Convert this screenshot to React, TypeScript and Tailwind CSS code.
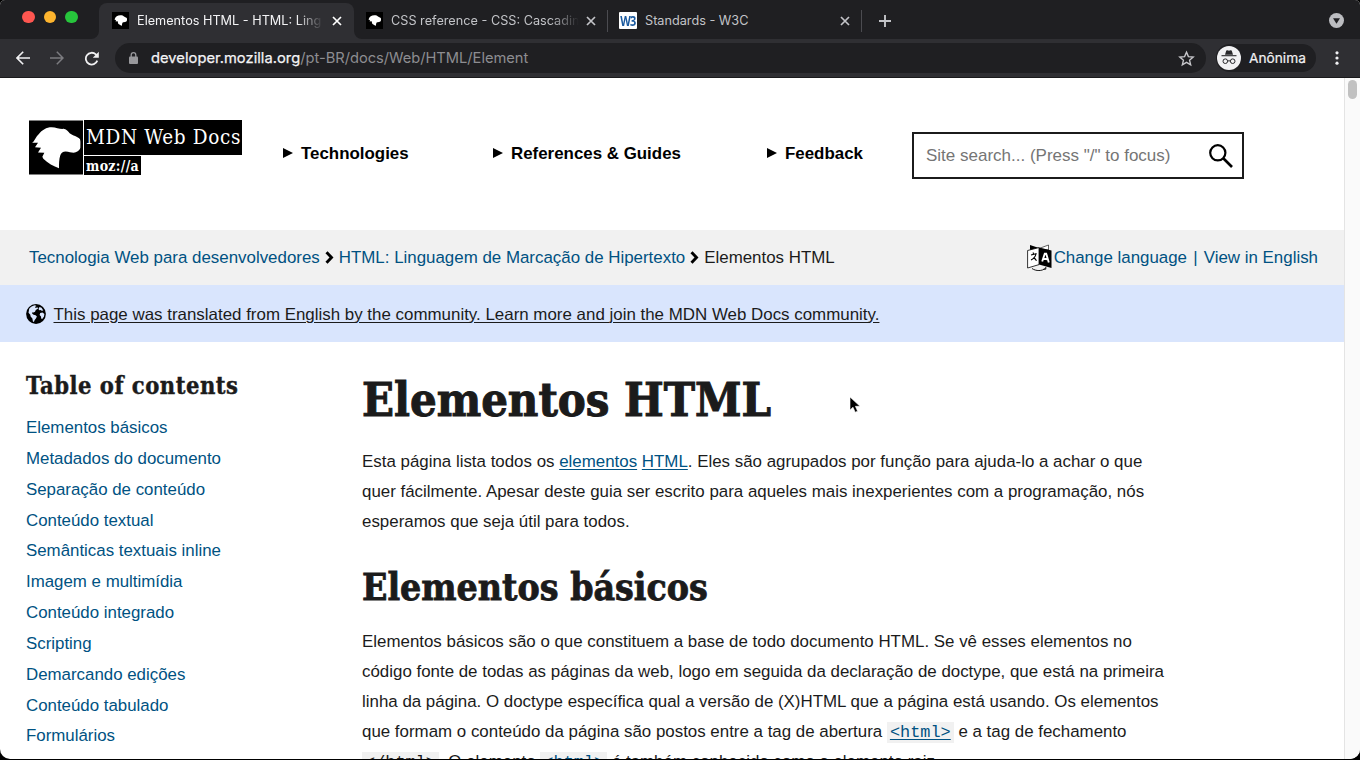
import type { ReactNode } from "react";

const toc = [
  "Elementos básicos",
  "Metadados do documento",
  "Separação de conteúdo",
  "Conteúdo textual",
  "Semânticas textuais inline",
  "Imagem e multimídia",
  "Conteúdo integrado",
  "Scripting",
  "Demarcando edições",
  "Conteúdo tabulado",
  "Formulários",
];

const DINO =
  "M9 67 C17 62 21 48 29 41 C39 28 52 20 68 20 C82 20 94 27 104 25 C114 27 118 34 122 38 C130 45 147 47 153 56 C155 62 154 70 154 82 C152 91 142 96 134 97 C126 97 120 93 110 93 C102 93 96 98 94 104 C90 116 90 130 90 143 C74 138 56 128 43 115 L40 109 L46 97 L27 96 L36 82 L18 80 L27 67 Z";

function DinoMark({ className }: { className: string }) {
  return (
    <svg viewBox="0 0 162 162" className={className}>
      <rect width="162" height="162" fill="#000" />
      <path d={DINO} fill="#fff" />
    </svg>
  );
}

function DinoFavicon() {
  return (
    <svg viewBox="0 0 17 17" className="h-[17px] w-[17px] shrink-0">
      <rect width="17" height="17" fill="#000" />
      <path d="M2.500 7.500C3.600 4.400 5.400 3.200 8.400 3.200c1.800 0 2.900.5 3.600 1.300l2.800 1.500c.5 1.500.3 3.200-.9 3.800-1.400.5-2.800.2-3.400 1-.5.900-.4 1.700-.5 2.900-2.200-.5-3.400-1.300-4.100-2.600l.1-1.700-2.600-.1.800-1z" fill="#fff" />
    </svg>
  );
}

function CloseX({ bright }: { bright?: boolean }) {
  return (
    <svg viewBox="0 0 10 10" className={bright ? "h-[10px] w-[10px] shrink-0 text-white" : "h-[10px] w-[10px] shrink-0 text-[#c3c4c8]"}>
      <path d="M1 1l8 8M9 1l-8 8" stroke="currentColor" strokeWidth="1.7" />
    </svg>
  );
}

function TabStrip() {
  return (
    <div className="flex h-[39px] shrink-0 bg-[#1f1f22] text-[12.700px]">
      <div className="flex w-[99px] gap-[9px] pt-[10.500px] pl-[22px]">
        <span className="h-[12.500px] w-[12.500px] rounded-full bg-[#fe5650]" />
        <span className="h-[12.500px] w-[12.500px] rounded-full bg-[#fdb42e]" />
        <span className="h-[12.500px] w-[12.500px] rounded-full bg-[#27c53c]" />
      </div>
      <div className="relative mt-[3px] flex h-[36px] w-[255px] items-center rounded-t-[8px] bg-[#2f2f33] pb-[1px] pl-[13px] text-[#f3f3f5]">
        <svg viewBox="0 0 8 8" className="absolute bottom-0 -left-[8px] h-[8px] w-[8px]">
          <path d="M8 0v8H0A8 8 0 0 0 8 0z" fill="#2f2f33" />
        </svg>
        <svg viewBox="0 0 8 8" className="absolute -right-[8px] bottom-0 h-[8px] w-[8px]">
          <path d="M0 0v8h8A8 8 0 0 1 0 0z" fill="#2f2f33" />
        </svg>
        <DinoFavicon />
        <span className="ml-[8px] w-[186px] overflow-hidden whitespace-nowrap [mask-image:linear-gradient(to_right,#000_160px,transparent_186px)]">
          Elementos HTML - HTML: Ling
        </span>
        <span className="ml-[9px] flex"><CloseX bright /></span>
      </div>
      <div className="flex h-[41px] w-[253px] items-center pl-[12px] text-[#c3c4c8]">
        <DinoFavicon />
        <span className="ml-[8px] w-[189px] overflow-hidden whitespace-nowrap [mask-image:linear-gradient(to_right,#000_160px,transparent_188px)]">
          CSS reference - CSS: Cascadin
        </span>
        <span className="ml-[6px] flex"><CloseX /></span>
      </div>
      <div className="mt-[10px] h-[22px] w-px bg-[#4b4b50]" />
      <div className="flex h-[41px] w-[253px] items-center pl-[11px] text-[#c3c4c8]">
        <span className="flex h-[17px] w-[18px] items-center justify-center rounded-[1px] bg-white">
          <span className="scale-x-[0.78] text-[14px] leading-[17px] font-bold tracking-[-1px] whitespace-nowrap text-[#1b5a9f] font-['Open_Sans']">W3</span>
        </span>
        <span className="ml-[8px] w-[195px]">Standards - W3C</span>
        <CloseX />
      </div>
      <div className="mt-[10px] h-[22px] w-px bg-[#4b4b50]" />
      <svg viewBox="0 0 12 12" className="mt-[14.500px] ml-[17px] h-[12px] w-[12px] text-[#c3c4c8]">
        <path d="M6 0v12M0 6h12" stroke="currentColor" strokeWidth="1.9" />
      </svg>
      <svg viewBox="0 0 16 16" className="mt-[13px] mr-[16px] ml-auto h-[15px] w-[15px]">
        <circle cx="8" cy="8" r="8" fill="#bcbdc1" />
        <path d="M4.300 5.500h7.400L8 11.500z" fill="#1f1f22" />
      </svg>
    </div>
  );
}

function Toolbar() {
  return (
    <div className="flex h-[39px] shrink-0 items-center border-b border-[#1a1a1c] bg-[#2f2f33]">
      <svg viewBox="0 0 14 14" className="ml-[16px] h-[14px] w-[14px]">
        <path d="M14 7H1.500M7.200 .8L1 7l6.200 6.200" fill="none" stroke="#f1f1f3" strokeWidth="1.600" />
      </svg>
      <svg viewBox="0 0 14 14" className="ml-[20px] h-[14px] w-[14px]">
        <path d="M0 7h12.500M6.800 .8L13 7l-6.200 6.200" fill="none" stroke="#7c7c80" strokeWidth="1.500" />
      </svg>
      <svg viewBox="0 0 16 16" className="ml-[20px] h-[15px] w-[15px]">
        <path d="M14.200 10.300A6.300 6.300 0 1 1 12.600 3.600L14.200 5.100" fill="none" stroke="#f1f1f3" strokeWidth="1.900" />
        <path d="M15.800 .8v6.400H9.300z" fill="#f1f1f3" />
      </svg>
      <div className="ml-[16px] flex h-[30px] w-[1091px] items-center rounded-full bg-[#1f1f22] pl-[14px] text-[14.700px]">
        <svg viewBox="0 0 9 12" className="h-[12px] w-[9px]">
          <rect y="4.500" width="9" height="7.500" rx="1" fill="#98989c" />
          <path d="M2.200 5V3a2.300 2.300 0 0 1 4.600 0v2" fill="none" stroke="#98989c" strokeWidth="1.300" />
        </svg>
        <span className="ml-[13px] tracking-[0.04px] text-[#f3f3f5] [-webkit-text-stroke:0.25px_#f3f3f5]">developer.mozilla.org</span>
        <span className="tracking-[-0.03px] text-[#8d8d91]">/pt-BR/docs/Web/HTML/Element</span>
        <svg viewBox="0 0 24 24" className="mr-[11px] ml-auto h-[17px] w-[17px]">
          <path d="M12 3l2.700 6.300 6.800.6-5.200 4.500 1.600 6.700L12 17.500l-5.900 3.600 1.600-6.700L2.500 9.900l6.800-.6z" fill="none" stroke="#c8c8cc" strokeWidth="1.900" />
        </svg>
      </div>
      <div className="ml-[10px] flex h-[28px] w-[100px] items-center rounded-full bg-[#1f1f22] pl-[1px]">
        <svg viewBox="0 0 24 24" className="h-[24px] w-[24px]">
          <circle cx="12" cy="12" r="12" fill="#f1f1f3" />
          <path d="M8 8.800l1.200-4c.2-.6.700-.7 1.200-.5l1.600.5 1.600-.5c.5-.2 1 0 1.200.5l1.200 4z" fill="#28282b" />
          <path d="M4.500 9.700h15" stroke="#28282b" strokeWidth="1.100" />
          <circle cx="8.300" cy="15.200" r="2.300" fill="none" stroke="#28282b" strokeWidth="1" />
          <circle cx="15.700" cy="15.200" r="2.300" fill="none" stroke="#28282b" strokeWidth="1" />
          <path d="M10.600 15.200q1.400-1 2.800 0" fill="none" stroke="#28282b" strokeWidth="1" />
        </svg>
        <span className="ml-[8px] text-[13.700px] text-[#f1f1f3] [-webkit-text-stroke:0.2px_#f1f1f3]">Anônima</span>
      </div>
      <svg viewBox="0 0 4 14" className="ml-[19px] h-[14px] w-[4px]">
        <circle cx="2" cy="1.800" r="1.600" fill="#f1f1f3" />
        <circle cx="2" cy="7" r="1.600" fill="#f1f1f3" />
        <circle cx="2" cy="12.200" r="1.600" fill="#f1f1f3" />
      </svg>
    </div>
  );
}

function NavItem({ label, className }: { label: string; className: string }) {
  return (
    <div className={`flex items-center text-[16.900px] leading-[20px] font-bold text-black ${className}`}>
      <svg viewBox="0 0 10 10" className="mr-[8px] mb-[2px] h-[10px] w-[10px]">
        <path d="M0 0l10 5-10 5z" fill="#000" />
      </svg>
      {label}
    </div>
  );
}

function SiteHeader() {
  return (
    <header className="flex h-[152px] shrink-0 items-start pl-[29px]">
      <div className="mt-[42px] flex h-[55px] w-[213px] gap-[1px] bg-white">
        <DinoMark className="h-[55px] w-[54px] shrink-0" />
        <div className="flex flex-col items-start gap-[1px] text-white font-['DejaVu_Serif_Condensed','DejaVu_Serif',serif]">
          <div className="h-[35px] w-[158px] bg-black pl-[2px] text-[20.500px] leading-[34px] tracking-[0.650px] whitespace-nowrap">MDN Web Docs</div>
          <div className="h-[19px] w-[57px] bg-black pl-[2px] text-[14px] leading-[20px] font-bold tracking-[0.300px]">moz://a</div>
        </div>
      </div>
      <nav className="mt-[66px] flex w-[670px]">
        <NavItem label="Technologies" className="ml-[41px] w-[210px]" />
        <NavItem label="References & Guides" className="w-[274px]" />
        <NavItem label="Feedback" className="" />
      </nav>
      <div className="mt-[54px] flex h-[47px] w-[332px] items-center border-2 border-[#1b1b1b] pl-[12px]">
        <span className="text-[17px] leading-[20px] text-[#757575]">Site search... (Press "/" to focus)</span>
        <svg viewBox="0 0 24 24" className="mr-[9px] ml-auto h-[24px] w-[24px]">
          <circle cx="8.800" cy="8.800" r="7.600" fill="none" stroke="#000" strokeWidth="2.200" />
          <path d="M14.500 14.500l8.500 8.500" stroke="#000" strokeWidth="2.700" />
        </svg>
      </div>
    </header>
  );
}

function Chevron() {
  return (
    <svg viewBox="0 0 9 13" className="mx-[5px] h-[13px] w-[9px]">
      <path d="M1.500 1.200l5 5.300-5 5.300" fill="none" stroke="#000" strokeWidth="2.900" />
    </svg>
  );
}

function LanguageIcon() {
  return (
    <svg viewBox="0 0 25 27" className="h-[27px] w-[25px]">
      <path d="M3 1l9 3v3L3 6z" fill="#000" />
      <path d="M12 4.500L21.500 1v5L13 4.800z" fill="#fff" stroke="#000" strokeWidth="0.600" />
      <path d="M.6 6.500L12 3.600v17L.6 24z" fill="#fff" stroke="#000" strokeWidth="0.800" />
      <path d="M12 3.600l12.500 2.900V24L12 20.600z" fill="#000" />
      <path d="M4 11l5-1.300c-.5 3-2.500 5-5 6.300M6.500 13.500c1.200.8 2.200 1.800 3 3.300M6 8.500l.6 1.600" fill="none" stroke="#000" strokeWidth="1.100" />
      <path d="M15.200 17.500L17.800 9.600h1.400l2.600 8.800M16.300 14.800l4.400.5" fill="none" stroke="#fff" strokeWidth="1.900" />
      <path d="M5 24.500c4 2.800 10 2.800 13.500-.3M18.800 23v2.200h-2.200" fill="none" stroke="#000" strokeWidth="0.900" />
    </svg>
  );
}

function Breadcrumbs() {
  return (
    <div className="flex h-[55px] shrink-0 items-center bg-[#f1f1f1] pr-[26px] pl-[29px] text-[16.900px] text-[#005282]">
      <span>Tecnologia Web para desenvolvedores</span>
      <Chevron />
      <span>HTML: Linguagem de Marcação de Hipertexto</span>
      <Chevron />
      <span className="text-[#1b1b1b]">Elementos HTML</span>
      <span className="ml-auto flex items-center">
        <LanguageIcon />
        <span className="ml-[2px]">Change language</span>
        <span className="mx-[6.200px]">|</span>
        <span>View in English</span>
      </span>
    </div>
  );
}

function Notice() {
  return (
    <div className="flex h-[57px] shrink-0 items-center bg-[#d9e5fd] pl-[26px]">
      <svg viewBox="0 0 20 20" className="h-[20px] w-[20px]">
        <circle cx="10" cy="10" r="9.900" fill="#000" />
        <path d="M3.200 4.800C4.500 3 6.500 1.600 9 1.300l1.500.8-1.600 1 .9.900 1.600-.8.7 1.400-2.300 1.500-.8 1.600-1.400.8-1.200-.3-.3 1.300 1.500 1.200 2 .6 1.300 1.300-1 2-1.200 1.300-.8 2.200-1-.7-.5-3-1.800-2-.3-1.700L2.500 8.800z" fill="#d9e5fd" />
        <path d="M13.500 3l2 .7 1.800 2.800-1.500.2-1.300-.7-1.200.3-.8-1.300zM14.200 9l2.300-.6 1.900 1.600-.5 2.700-1.700 2.300-1-.4-.2-2.200-1.400-1.400z" fill="#d9e5fd" />
      </svg>
      <span className="ml-[7.500px] pt-[2px] text-[16.910px] leading-[20px] text-[#1b1b1b] underline decoration-1 underline-offset-[2px]">
        This page was translated from English by the community. Learn more and join the MDN Web Docs community.
      </span>
    </div>
  );
}

function Code({ children, link }: { children: ReactNode; link?: boolean }) {
  return (
    <code className="bg-[#f1f1f1] px-[3px] py-[1px] text-[16.900px] leading-[10px] font-['Liberation_Mono',monospace]">
      <span className={link ? "text-[#005282] underline decoration-1 underline-offset-[2px]" : ""}>{children}</span>
    </code>
  );
}

function Sidebar() {
  return (
    <aside className="w-[362px] shrink-0 pl-[26px]">
      <h2 className="mt-[29px] text-[23.500px] leading-[30px] font-bold tracking-[0.500px] text-[#1b1b1b] [-webkit-text-stroke:0.4px_#1b1b1b] font-['DejaVu_Serif_Condensed','DejaVu_Serif',serif]">
        Table of contents
      </h2>
      <ul className="mt-[12px] text-[16.880px] leading-[30.850px] text-[#005282]">
        {toc.map((item) => (
          <li key={item}>{item}</li>
        ))}
      </ul>
    </aside>
  );
}

function Article() {
  return (
    <main className="text-[16.900px] leading-[30px] whitespace-nowrap text-[#1b1b1b]">
      <h1 className="mt-[28px] text-[46.700px] leading-[60px] font-bold [-webkit-text-stroke:1px_#1b1b1b] font-['DejaVu_Serif_Condensed','DejaVu_Serif',serif]">Elementos HTML</h1>
      <p className="mt-[17px]">
        Esta página lista todos os <span className="text-[#005282] underline decoration-1 underline-offset-[2px]">elementos</span>{" "}
        <span className="text-[#005282] underline decoration-1 underline-offset-[2px]">HTML</span>. Eles são agrupados por função para ajuda-lo a achar o que
        <br />
        quer fácilmente. Apesar deste guia ser escrito para aqueles mais inexperientes com a programação, nós
        <br />
        esperamos que seja útil para todos.
      </p>
      <h2 className="mt-[25px] text-[37.100px] leading-[50px] font-bold [-webkit-text-stroke:0.8px_#1b1b1b] font-['DejaVu_Serif_Condensed','DejaVu_Serif',serif]">Elementos básicos</h2>
      <p className="mt-[15px]">
        Elementos básicos são o que constituem a base de todo documento HTML. Se vê esses elementos no
        <br />
        código fonte de todas as páginas da web, logo em seguida da declaração de doctype, que está na primeira
        <br />
        linha da página. O doctype específica qual a versão de (X)HTML que a página está usando. Os elementos
        <br />
        que formam o conteúdo da página são postos entre a tag de abertura <Code link>&lt;html&gt;</Code> e a tag de fechamento
        <br />
        <Code>&lt;/html&gt;</Code>. O elemento <Code link>&lt;html&gt;</Code> é também conhecido como o elemento raiz.
      </p>
    </main>
  );
}

export default function App() {
  return (
    <div className="relative h-[760px] w-[1360px] overflow-hidden bg-black">
      <div className="flex h-[759px] flex-col overflow-hidden rounded-t-[5px] rounded-b-[10px] bg-white font-['Inter',sans-serif]">
        <TabStrip />
        <Toolbar />
        <div className="flex min-h-0 flex-1 font-['Liberation_Sans',Arial,sans-serif]">
          <div className="flex w-[1344px] flex-col overflow-hidden">
            <SiteHeader />
            <Breadcrumbs />
            <Notice />
            <div className="flex min-h-0 flex-1 overflow-hidden">
              <Sidebar />
              <Article />
            </div>
          </div>
          <div className="w-[16px] border-l border-[#e4e4e4] bg-[#fafafa] pt-[2px] pl-[3px]">
            <div className="h-[19px] w-[9px] rounded-full bg-[#c1c1c1]" />
          </div>
        </div>
      </div>
      <svg viewBox="0 0 12 18" className="absolute top-[396px] left-[849px] h-[18px] w-[12px]">
        <path d="M1 1v13l3-2.800 2.200 5 2.400-1-2.200-4.900H11z" fill="#000" stroke="#fff" strokeWidth="0.600" />
      </svg>
    </div>
  );
}
